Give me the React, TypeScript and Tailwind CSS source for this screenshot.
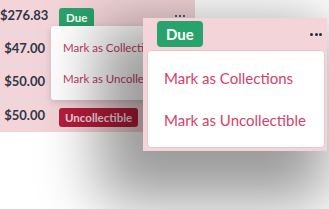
import { Fragment } from 'react';

const rows = [
    { amount: '$276.83', status: 'due' },
    { amount: '$47.00', status: null },
    { amount: '$50.00', status: null },
    { amount: '$50.00', status: 'uncollectible' },
];

function Dots({ big }: { big?: boolean }) {
    const dot = big ? 'w-[3px] h-[3px] bg-[#1f2a44]' : 'w-[2.5px] h-[2.5px] bg-[#2a3550]';
    return (
        <div className="flex items-center gap-[1.5px]">
            <span className={`${dot} rounded-full`} />
            <span className={`${dot} rounded-full`} />
            <span className={`${dot} rounded-full`} />
        </div>
    );
}

export default function App() {
    return (
        <div
            className="relative w-[329px] h-[209px] overflow-hidden bg-white"
            style={{ fontFamily: 'Lato, "Open Sans", sans-serif' }}
        >
            {/* table */}
            <div className="w-[195px] bg-[#f3d5d9]">
                {rows.map((r, i) => (
                    <Fragment key={i}>
                        <div className={`flex items-center h-[33px] ${i < 3 ? 'border-b border-[#dcdbea]' : ''}`}>
                            <div className="w-[46px] text-right text-[13px] font-bold text-[#2f3747] pr-[1px]">{r.amount}</div>
                            <div className="flex-1 flex items-center justify-between pl-[13px] pr-[10px]">
                                <div>
                                    {r.status === 'due' && (
                                        <span className="inline-flex items-center h-[20px] px-[7px] rounded-[3px] bg-[#29a36c] text-white text-[11.5px] font-bold">Due</span>
                                    )}
                                    {r.status === 'uncollectible' && (
                                        <span className="inline-flex items-center h-[19px] px-[6px] rounded-[3px] bg-[#b91c3c] text-[#f6dde2] text-[11.5px] font-bold">Uncollectible</span>
                                    )}
                                </div>
                                {i === 0 && <Dots />}
                            </div>
                        </div>
                    </Fragment>
                ))}
            </div>

            {/* small dropdown */}
            <div className="absolute left-[51px] top-[26px] w-[136px] h-[74px] rounded-[3px] bg-white shadow-[0_2px_6px_rgba(0,0,0,0.15)] flex flex-col justify-center gap-[13px] pl-[12px] text-[11.5px] text-[#c93a62]">
                <div className="whitespace-nowrap">Mark as Collections</div>
                <div className="whitespace-nowrap">Mark as Uncollectible</div>
            </div>

            {/* magnified panel */}
            <div className="absolute left-[143px] top-[18px] w-[184px] h-[133px] bg-[#f3d5d9] shadow-[-22px_28px_60px_22px_rgba(0,0,0,0.4)]">
                <div className="flex items-center justify-between h-[32px] pl-[14px] pr-[5px]">
                    <span className="inline-flex items-center h-[26px] px-[9px] rounded-[4px] bg-[#29a36c] text-white text-[15px] font-bold">Due</span>
                    <Dots big />
                </div>
                <div className="ml-[4px] w-[178px] h-[98px] rounded-[4px] bg-white border border-[#ecc5cc] flex flex-col justify-center gap-[20px] pl-[16px] text-[15px] text-[#d64169]">
                    <div className="whitespace-nowrap">Mark as Collections</div>
                    <div className="whitespace-nowrap">Mark as Uncollectible</div>
                </div>
            </div>
        </div>
    );
}
